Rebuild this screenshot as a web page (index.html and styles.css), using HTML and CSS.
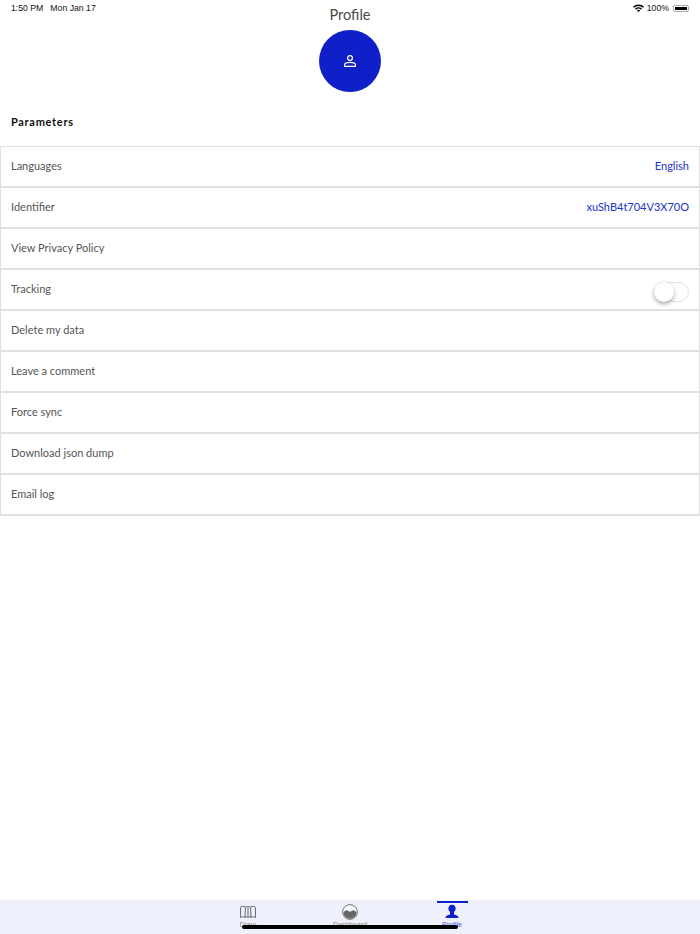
FILE: index.html
```html
<!DOCTYPE html>
<html lang="en">
<head>
    <meta charset="UTF-8">
    <meta name="viewport" content="width=device-width, initial-scale=1.0">
    <title>Profile</title>
    <link rel="stylesheet" href="styles.css">
</head>
<body>
    <div class="status-bar">
        <div class="status-time">
            <span>1:50 PM</span>
            <span>Mon Jan 17</span>
        </div>
        <div class="status-right">
            <svg class="wifi-icon" width="11" height="8" viewBox="0 0 11 8">
                <path d="M0 2.7A8 8 0 0 1 11 2.7L10 3.8A6.5 6.5 0 0 0 1 3.8Z" fill="#000"/>
                <path d="M2 4.7A5 5 0 0 1 9 4.7L8 5.8A3.6 3.6 0 0 0 3 5.8Z" fill="#000"/>
                <path d="M3.8 6.5A2.4 2.4 0 0 1 7.2 6.5L5.5 8Z" fill="#000"/>
            </svg>
            <span>100%</span>
            <div class="battery"><div class="battery-fill"></div></div>
        </div>
    </div>

    <div class="page-title">Profile</div>

    <div class="avatar-row">
        <div class="avatar">
            <svg width="14" height="14" viewBox="0 0 14 14" fill="none" stroke="#fff" stroke-width="1.2">
                <circle cx="7" cy="4" r="2.4"/>
                <path d="M1.6 12.4V10.6C1.6 9.2 4 8.3 7 8.3S12.4 9.2 12.4 10.6V12.4Z" stroke-linejoin="round"/>
            </svg>
        </div>
    </div>

    <div class="section-title">Parameters</div>

    <div class="param-list">
        <div class="param-row"><span>Languages</span><span class="param-value">English</span></div>
        <div class="param-row"><span>Identifier</span><span class="param-value">xuShB4t704V3X70O</span></div>
        <div class="param-row"><span>View Privacy Policy</span></div>
        <div class="param-row">
            <span>Tracking</span>
            <div class="toggle"><div class="toggle-knob"></div></div>
        </div>
        <div class="param-row"><span>Delete my data</span></div>
        <div class="param-row"><span>Leave a comment</span></div>
        <div class="param-row"><span>Force sync</span></div>
        <div class="param-row"><span>Download json dump</span></div>
        <div class="param-row"><span>Email log</span></div>
    </div>

    <div class="tab-bar">
        <div class="tab">
            <svg width="16" height="16" viewBox="0 0 16 16" fill="none" stroke="#666" stroke-width="1" stroke-linejoin="round">
                <path d="M.7 3.2C2 2 3.6 2 5.4 3.2C6.2 2 7.4 2 8 3.2C8.6 2 9.8 2 10.6 3.2C12.4 2 14 2 15.3 3.2L15.7 13.6C14 12.4 12.6 12.4 11 13.6C10 12.4 9 12.4 8 13.6C7 12.4 6 12.4 5 13.6C3.4 12.4 2 12.4 .3 13.6Z"/>
                <path d="M5.4 3.2L5 13.6M8 3.2V13.6M10.6 3.2L11 13.6"/>
            </svg>
            <span class="tab-label">Diary</span>
        </div>
        <div class="tab">
            <svg width="16" height="16" viewBox="0 0 16 16">
                <circle cx="8" cy="8" r="7.4" fill="#f6f7fd" stroke="#777" stroke-width="1"/>
                <path d="M1.4 8.2C2.6 7.4 3.6 6.2 4.8 6.2C6 6.2 6.6 7.6 8 7.6C9.4 7.6 10 6.2 11.2 6.2C12.4 6.2 13.4 7.4 14.6 8.2A6.6 6.6 0 0 1 1.4 8.2Z" fill="#666"/>
            </svg>
            <span class="tab-label">Dashboard</span>
        </div>
        <div class="tab tab-active">
            <svg width="16" height="16" viewBox="0 0 16 16" fill="#1020c8">
                <ellipse cx="8" cy="4.6" rx="3.6" ry="3.8"/>
                <path d="M6 7.5H10V10.4C12.4 10.9 14.2 11.6 14.6 14H1.4C1.8 11.6 3.6 10.9 6 10.4Z"/>
            </svg>
            <span class="tab-label">Profile</span>
        </div>
        <div class="home-indicator"></div>
    </div>
</body>
</html>
```

FILE: styles.css
```css
html, body {
    height: 100%;
}

body {
    font-family: Lato, sans-serif;
    margin: 0;
    background: #fff;
    color: #555;
    display: flex;
    flex-direction: column;
}

.status-bar {
    display: flex;
    justify-content: space-between;
    align-items: center;
    height: 16px;
    padding: 0 11px;
    font-family: "Liberation Sans", sans-serif;
    font-size: 8.7px;
    color: #111;
}

.status-time {
    display: flex;
    gap: 7px;
}

.status-right {
    display: flex;
    align-items: center;
    gap: 3px;
}

.battery {
    width: 16px;
    height: 7px;
    padding: 1px;
    border: 1px solid #aaa;
    border-radius: 2px;
    box-sizing: border-box;
    margin-left: 1px;
}

.battery-fill {
    height: 100%;
    background: #000;
}

/* title sits on the same line as the status bar */
.page-title {
    text-align: center;
    font-size: 14.5px;
    line-height: 14px;
    color: #4a4a4a;
    margin: -8px 0 8px;
}

.avatar-row {
    display: flex;
    justify-content: center;
}

.avatar {
    width: 62px;
    height: 62px;
    border-radius: 50%;
    background: #1020c8;
    display: flex;
    align-items: center;
    justify-content: center;
}

.section-title {
    font-size: 11px;
    font-weight: bold;
    letter-spacing: 0.7px;
    color: #111;
    padding: 23px 11px 17px;
    line-height: 14px;
}

.param-list {
    border-top: 1px solid #e0e0e0;
}

.param-row {
    display: flex;
    justify-content: space-between;
    align-items: flex-start;
    height: 41px;
    box-sizing: border-box;
    padding: 11.5px 10px 0;
    border-left: 1px solid #e0e0e0;
    border-right: 1px solid #e0e0e0;
    border-bottom: 2px solid #e0e0e0;
    font-size: 11px;
    line-height: 14px;
}

.param-value {
    color: #2030d0;
}

.toggle {
    width: 35px;
    height: 20px;
    box-sizing: border-box;
    border: 1px solid #e4e4e4;
    border-radius: 10px;
    margin-top: 0.5px;
    position: relative;
}

.toggle-knob {
    position: absolute;
    left: -1px;
    top: -1px;
    width: 20px;
    height: 20px;
    border-radius: 50%;
    background: #fff;
    box-shadow: 0 2px 4px rgba(0, 0, 0, 0.35);
}

.tab-bar {
    margin-top: auto;
    height: 34px;
    background: #eef0fb;
    display: flex;
    justify-content: center;
    gap: 31px;
    position: relative;
}

.tab {
    width: 71px;
    display: flex;
    flex-direction: column;
    align-items: center;
    padding-top: 4px;
    box-sizing: border-box;
    overflow: hidden;
    height: 34px;
    position: relative;
}

.tab svg {
    flex-shrink: 0;
}

.tab-label {
    font-family: "Liberation Sans", sans-serif;
    font-size: 7px;
    line-height: 8px;
    color: #888;
    margin-top: 1px;
}

.tab-active::before {
    content: "";
    position: absolute;
    top: 1px;
    left: 20px;
    width: 31px;
    height: 2px;
    background: #1020c8;
}

.tab-active .tab-label {
    color: #4a58dc;
}

.home-indicator {
    position: absolute;
    left: 242px;
    bottom: 5px;
    width: 216px;
    height: 4px;
    border-radius: 2px;
    background: #000;
}
```
